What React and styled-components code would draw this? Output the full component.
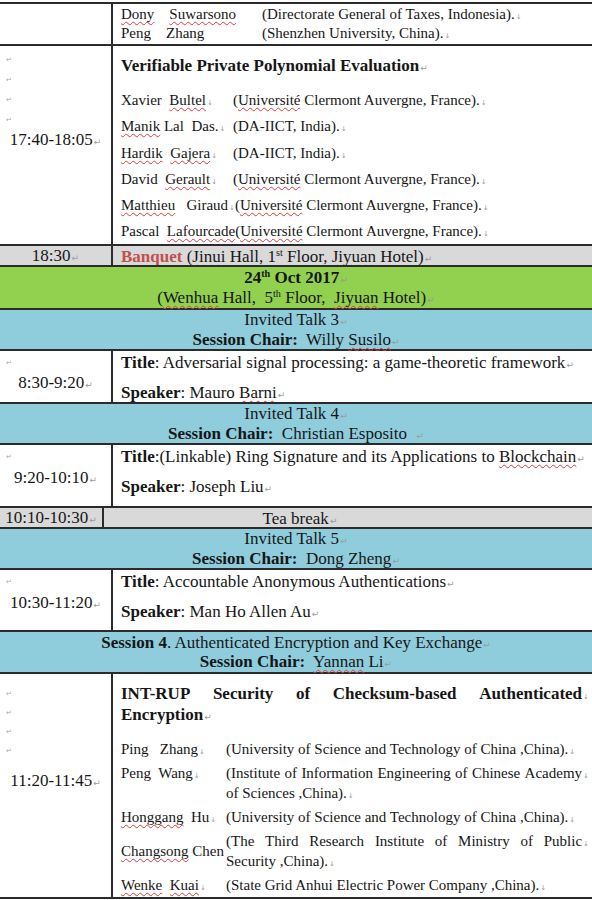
import React from 'react';
import styled, { createGlobalStyle } from 'styled-components';

const Global = createGlobalStyle`
  html, body { margin: 0; padding: 0; background: #fff; }
  body {
    font-family: "Liberation Serif", "Times New Roman", serif;
    color: #161616;
  }
`;

const LINE = '#2b2b2b';

const Page = styled.div`
  width: 592px;
  height: 900px;
  overflow: hidden;
  padding-top: 2px;
  box-sizing: border-box;
`;

const Table = styled.div`
  border-top: 2px solid ${LINE};
`;

const Row = styled.div`
  display: grid;
  grid-template-columns: ${p => p.$left ?? 113}px 1fr;
  height: ${p => p.$h}px;
  box-sizing: border-box;
  background: ${p => p.$bg ?? '#fff'};
  border-bottom: 2px solid ${LINE};
  overflow: hidden;
`;

const Band = styled.div`
  height: ${p => p.$h}px;
  box-sizing: border-box;
  background: ${p => p.$bg};
  border-bottom: 2px solid ${LINE};
  display: flex;
  flex-direction: column;
  justify-content: center;
  align-items: center;
  font-size: 17px;
  line-height: 19.5px;
  white-space: pre;
`;

const TimeCell = styled.div`
  border-right: 2px solid ${LINE};
  padding-top: ${p => p.$top ?? 0}px;
  display: flex;
  flex-direction: column;
  justify-content: ${p => (p.$center ? 'center' : 'flex-start')};
  font-size: 17px;
  line-height: 20px;
`;

const Time = styled.div`
  text-align: center;
  white-space: nowrap;
  margin-top: ${p => p.$mt ?? 0}px;
`;

const MarkLine = styled.div`
  height: ${p => p.$lh ?? 20}px;
  line-height: ${p => p.$lh ?? 20}px;
  padding-left: 6px;
  font-family: "DejaVu Sans", sans-serif;
  font-size: 7px;
  color: #a8a8a8;
`;

const Content = styled.div`
  padding: ${p => p.$top ?? 0}px 3px 0 8px;
  display: flex;
  flex-direction: column;
  justify-content: ${p => (p.$center ? 'center' : 'flex-start')};
  font-size: ${p => p.$fs ?? 15}px;
  line-height: ${p => p.$lh ?? 20}px;
  white-space: nowrap;
  min-width: 0;
`;

const CenterCell = styled.div`
  display: flex;
  align-items: center;
  justify-content: center;
  padding-right: ${p => p.$shift ?? 0}px;
  font-size: 17px;
  line-height: 19px;
  white-space: pre;
`;

const Pm = styled.span`
  font-family: "DejaVu Sans", sans-serif;
  font-size: 9px;
  line-height: 0;
  color: #9c9c9c;
  margin-left: 1px;
  font-weight: normal;
`;

const Lb = styled.span`
  font-family: "DejaVu Sans", sans-serif;
  font-size: 7px;
  line-height: 0;
  color: #9c9c9c;
  margin-left: 1px;
  font-weight: normal;
`;

const Sp = styled.span`
  text-decoration: underline wavy #e33a3a;
  text-decoration-thickness: 1px;
  text-underline-offset: 2px;
  text-decoration-skip-ink: none;
`;

const Sup = styled.sup`
  font-size: 0.6em;
  line-height: 0;
  vertical-align: 0.55em;
`;

const Red = styled.b`
  color: #c0504d;
`;

const PaperTitle = styled.div`
  font-size: 17px;
  font-weight: bold;
  line-height: ${p => p.$lh ?? 26}px;
  margin-bottom: ${p => p.$mb ?? 0}px;
`;

const JustRow = styled.div`
  display: flex;
  justify-content: space-between;
  white-space: nowrap;
`;

const Authors = styled.div`
  display: flex;
  flex-direction: column;
  gap: ${p => p.$gap ?? 0}px;
  line-height: ${p => p.$lh ?? 20}px;
  font-size: 15px;
`;

const Author = styled.div`
  display: flex;
  align-items: ${p => (p.$center ? 'center' : 'flex-start')};
`;

const Name = styled.span`
  flex: none;
  min-width: ${p => p.$w}px;
  white-space: pre;
`;

const Affil = styled.div`
  flex: 1;
  min-width: 0;
  white-space: pre;
`;

const Talk = styled.div`
  padding-top: 2px;
  display: flex;
  flex-direction: column;
  gap: 10px;
  font-size: 17px;
  line-height: 20px;
  white-space: nowrap;
`;

const Marks = ({ n, lh }) =>
  Array.from({ length: n }, (_, i) => (
    <MarkLine key={i} $lh={lh}>↵</MarkLine>
  ));

const P = () => <Pm>↵</Pm>;
const L = () => <Lb>↓</Lb>;

const Just = ({ words, mark }) => (
  <JustRow>
    {words.map((w, i) => (
      <span key={i}>
        {w}
        {mark && i === words.length - 1 ? <L /> : null}
      </span>
    ))}
  </JustRow>
);

export default function App() {
  return (
    <Page>
      <Global />
      <Table>
        {/* trailing authors of previous paper */}
        <Row $h={42}>
          <TimeCell />
          <Content $center>
            <Authors $lh={19}>
              <Author>
                <Name $w={141}><Sp>Dony</Sp>{'    '}<Sp>Suwarsono</Sp></Name>
                <Affil>(Directorate General of Taxes, Indonesia).<L /></Affil>
              </Author>
              <Author>
                <Name $w={141}>{'Peng    Zhang'}</Name>
                <Affil>(Shenzhen University, China).<L /></Affil>
              </Author>
            </Authors>
          </Content>
        </Row>

        <Row $h={200}>
          <TimeCell $top={4}>
            <Marks n={4} />
            <Time>17:40-18:05<P /></Time>
          </TimeCell>
          <Content $top={7}>
            <PaperTitle $mb={8}>Verifiable Private Polynomial Evaluation<P /></PaperTitle>
            <Authors $lh={26.3}>
              <Author>
                <Name $w={112}>Xavier  <Sp>Bultel</Sp><L /></Name>
                <Affil>(<Sp>Université</Sp> Clermont Auvergne, France).<L /></Affil>
              </Author>
              <Author>
                <Name $w={112}><Sp>Manik</Sp> Lal  Das.<L /></Name>
                <Affil>(DA-IICT, India).<L /></Affil>
              </Author>
              <Author>
                <Name $w={112}><Sp>Hardik</Sp>  <Sp>Gajera</Sp><L /></Name>
                <Affil>(DA-IICT, India).<L /></Affil>
              </Author>
              <Author>
                <Name $w={112}>David  <Sp>Gerault</Sp><L /></Name>
                <Affil>(<Sp>Université</Sp> Clermont Auvergne, France).<L /></Affil>
              </Author>
              <Author>
                <Name $w={112}><Sp>Matthieu</Sp>   Giraud<L /></Name>
                <Affil>(<Sp>Université</Sp> Clermont Auvergne, France).<L /></Affil>
              </Author>
              <Author>
                <Name $w={112}>Pascal  <Sp>Lafourcade</Sp></Name>
                <Affil>(<Sp>Université</Sp> Clermont Auvergne, France).<L /></Affil>
              </Author>
            </Authors>
          </Content>
        </Row>

        <Row $h={21} $bg="#d9d9d9">
          <TimeCell $center>
            <Time>18:30<P /></Time>
          </TimeCell>
          <Content $center $fs={17} $lh={19}>
            <span>
              <Red>Banquet</Red> (<Sp>Jinui</Sp> Hall, 1<Sup>st</Sup> Floor, <Sp>Jiyuan</Sp> Hotel)<P />
            </span>
          </Content>
        </Row>

        <Band $h={43} $bg="#92d050">
          <b>24<Sup>th</Sup> Oct 2017<P /></b>
          <span>(<Sp>Wenhua</Sp> Hall,  5<Sup>th</Sup> Floor,  <Sp>Jiyuan</Sp> Hotel)<P /></span>
        </Band>

        <Band $h={41} $bg="#8fcddd">
          <span>Invited Talk 3<P /></span>
          <span><b>Session Chair:</b>  Willy <Sp>Susilo</Sp><P /></span>
        </Band>

        <Row $h={53}>
          <TimeCell $top={2}>
            <Marks n={1} />
            <Time>8:30-9:20<P /></Time>
          </TimeCell>
          <Content>
            <Talk>
              <span><b>Title</b>: Adversarial signal processing: a game-theoretic framework<P /></span>
              <span><b>Speaker</b>: Mauro <Sp>Barni</Sp><P /></span>
            </Talk>
          </Content>
        </Row>

        <Band $h={41} $bg="#8fcddd">
          <span>Invited Talk 4<P /></span>
          <span><b>Session Chair:</b>  Christian Esposito  <P /></span>
        </Band>

        <Row $h={63}>
          <TimeCell $top={2}>
            <Marks n={1} />
            <Time $mt={1}>9:20-10:10<P /></Time>
          </TimeCell>
          <Content>
            <Talk>
              <span><b>Title</b>:(Linkable) Ring Signature and its Applications to <Sp>Blockchain</Sp><P /></span>
              <span><b>Speaker</b>: Joseph Liu<P /></span>
            </Talk>
          </Content>
        </Row>

        <Row $h={21} $left={104} $bg="#d9d9d9">
          <TimeCell $center>
            <Time>10:10-10:30<P /></Time>
          </TimeCell>
          <CenterCell $shift={96}>
            <span>Tea break<P /></span>
          </CenterCell>
        </Row>

        <Band $h={41} $bg="#8fcddd">
          <span>Invited Talk 5<P /></span>
          <span><b>Session Chair:</b>  Dong Zheng<P /></span>
        </Band>

        <Row $h={62}>
          <TimeCell $top={2}>
            <Marks n={1} />
            <Time $mt={1}>10:30-11:20<P /></Time>
          </TimeCell>
          <Content>
            <Talk>
              <span><b>Title</b>: Accountable Anonymous Authentications<P /></span>
              <span><b>Speaker</b>: Man Ho Allen Au<P /></span>
            </Talk>
          </Content>
        </Row>

        <Band $h={42} $bg="#8fcddd">
          <span><b>Session 4</b>. Authenticated Encryption and Key Exchange<P /></span>
          <span><b>Session Chair:</b>  <Sp>Yannan</Sp> Li<P /></span>
        </Band>

        <Row $h={225}>
          <TimeCell $top={11}>
            <Marks n={4} lh={19} />
            <Time $mt={10}>11:20-11:45<P /></Time>
          </TimeCell>
          <Content $top={9}>
            <PaperTitle $lh={21} $mb={14}>
              <Just words={['INT-RUP', 'Security', 'of', 'Checksum-based', 'Authenticated']} mark />
              <div>Encryption<P /></div>
            </PaperTitle>
            <Authors $gap={4}>
              <Author>
                <Name $w={105}>{'Ping   Zhang'}<L /></Name>
                <Affil>(University of Science and Technology of China ,China).<L /></Affil>
              </Author>
              <Author>
                <Name $w={105}>{'Peng  Wang'}<L /></Name>
                <Affil>
                  <Just words={['(Institute', 'of', 'Information', 'Engineering', 'of', 'Chinese', 'Academy']} mark />
                  <div>of Sciences ,China).<L /></div>
                </Affil>
              </Author>
              <Author>
                <Name $w={105}><Sp>Honggang</Sp>  Hu<L /></Name>
                <Affil>(University of Science and Technology of China ,China).<L /></Affil>
              </Author>
              <Author $center>
                <Name $w={105}><Sp>Changsong</Sp> Chen</Name>
                <Affil>
                  <Just words={['(The', 'Third', 'Research', 'Institute', 'of', 'Ministry', 'of', 'Public']} mark />
                  <div>Security ,China).<L /></div>
                </Affil>
              </Author>
              <Author>
                <Name $w={105}><Sp>Wenke</Sp>  <Sp>Kuai</Sp><L /></Name>
                <Affil>(State Grid Anhui Electric Power Company ,China).<L /></Affil>
              </Author>
            </Authors>
          </Content>
        </Row>
      </Table>
    </Page>
  );
}
